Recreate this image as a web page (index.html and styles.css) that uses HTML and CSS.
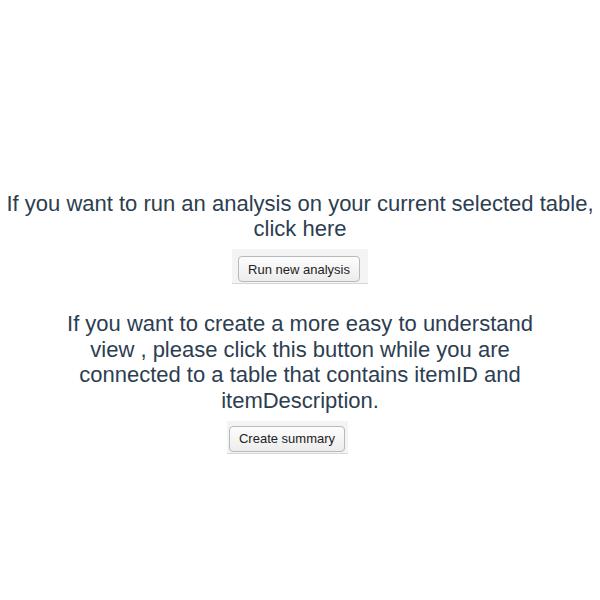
FILE: index.html
```html
<!DOCTYPE html>
<html>
<head>
<meta charset="utf-8">
<link rel="stylesheet" href="styles.css">
</head>
<body>
<div class="page">
  <section class="block block-wide">
    <p class="msg">If you want to run an analysis on your current selected table, click here</p>
    <div class="btn-wrap btn-wrap-1"><button class="btn">Run new analysis</button></div>
  </section>
  <section class="block block-narrow">
    <p class="msg msg-2">If you want to create a more easy to understand view , please click this button while you are connected to a table that contains itemID and itemDescription.</p>
    <div class="btn-wrap btn-wrap-2"><button class="btn">Create summary</button></div>
  </section>
</div>
</body>
</html>
```

FILE: styles.css
```css
html, body {
  margin: 0;
  padding: 0;
  background: #ffffff;
}
.page {
  width: 600px;
  padding-top: 191px;
  display: flex;
  flex-direction: column;
  align-items: center;
  font-family: "Liberation Sans", Arial, sans-serif;
}
.block {
  display: flex;
  flex-direction: column;
  align-items: center;
}
.block-wide {
  width: 600px;
}
.block-narrow {
  width: 490px;
  margin-top: 27px;
}
.msg {
  margin: 0;
  text-align: center;
  font-size: 22px;
  line-height: 25px;
  color: #2c3e50;
}
.msg-2 {
  line-height: 25.7px;
}
.btn-wrap {
  background: #f4f4f4;
  border-bottom: 1px solid #d6d6d6;
  display: flex;
  justify-content: center;
}
.btn-wrap-1 {
  margin-top: 8px;
  padding: 7px 8px 1px 6px;
}
.btn-wrap-2 {
  margin-top: 7px;
  margin-right: 25px;
  padding: 5px 3px 1px 2px;
}
.btn {
  font-family: "Liberation Sans", Arial, sans-serif;
  font-size: 13px;
  color: #222;
  height: 26px;
  padding: 0 9px;
  border: 1px solid #b9b9b9;
  border-radius: 4px;
  background: linear-gradient(#fdfdfd, #ececec);
}
```
